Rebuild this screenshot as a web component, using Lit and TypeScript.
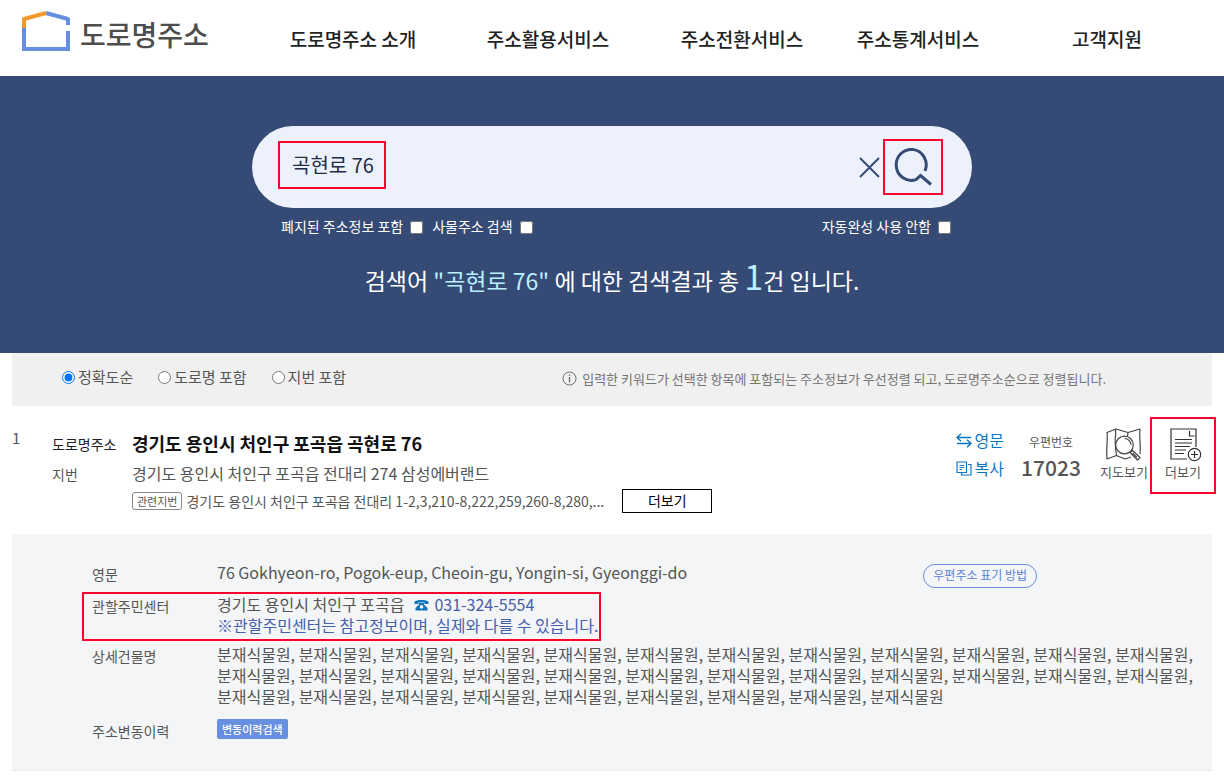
import { LitElement, html, css, svg } from "lit";
import { customElement, state } from "lit/decorators.js";

const NAV = ["도로명주소 소개", "주소활용서비스", "주소전환서비스", "주소통계서비스", "고객지원"];
const SORTS = ["정확도순", "도로명 포함", "지번 포함"];
const BUILDINGS = Array.from({ length: 33 }, () => "분재식물원").join(", ");

const logoIcon = svg`<svg width="48" height="41" viewBox="0 0 48 41" fill="none" stroke-width="4" stroke-linejoin="round" aria-hidden="true">
  <path d="M2 17V38H46V20" stroke="#668fdf" stroke-linejoin="miter"/>
  <path d="M24 2L46 8V14" stroke="#668fdf"/>
  <path d="M2 17V8L24 2" stroke="#f39a2b"/>
</svg>`;
const clearIcon = svg`<svg width="21" height="21" viewBox="0 0 21 21" fill="none" stroke="#354a74" stroke-width="2" aria-hidden="true"><path d="M1 1L20 20M20 1L1 20"/></svg>`;
const searchIcon = svg`<svg width="38" height="38" viewBox="0 0 38 38" fill="none" stroke="#354a74" stroke-width="3" aria-hidden="true">
  <path d="M31 23A15 15.500 0 1 0 22 31.600L26.500 27.500L37 36.500"/>
</svg>`;
const infoIcon = svg`<svg width="15" height="15" viewBox="0 0 15 15" fill="none" stroke="#707070" aria-hidden="true"><circle cx="7.500" cy="7.500" r="6.500"/><path d="M7.500 6V11.500M7.500 3.500V5" stroke-width="1.300"/></svg>`;
const swapIcon = svg`<svg width="16" height="15" viewBox="0 0 16 15" fill="none" stroke="#0b77c4" stroke-width="1.400" aria-hidden="true"><path d="M15 4.500H1M5 .800L1 4.500L5 8.200M1 10.500H15M11 6.800L15 10.500L11 14.200"/></svg>`;
const copyIcon = svg`<svg width="16" height="15" viewBox="0 0 16 15" fill="none" stroke="#0b77c4" stroke-width="1.200" aria-hidden="true"><path d="M1 1H10.500V11.500H1ZM12 3.500H15V14H5.500V12M3.500 4.500H8M3.500 6.500H8M3.500 8.500H6"/></svg>`;
const mapIcon = svg`<svg width="36" height="34" viewBox="0 0 36 34" fill="none" stroke="#444" stroke-width="1.200" stroke-linejoin="round" aria-hidden="true">
  <path d="M9.500 8C10.500 5 8.500 4 10 1L1 4.500C2 12 0 20 1 31L10.500 27.500L19 31L25 29M10 1L22 4.500L34 1C33 8 35 17 34 26M22 4.500L21.500 8M9.500 8C8.500 12 9.500 20 10.500 27.500"/>
  <circle cx="18.500" cy="17" r="8.800" fill="#fff"/>
  <path d="M18.500 10.500A6.500 6.500 0 0 1 25 17" />
  <path d="M24 24.500L31.500 32L34 29.500L26.500 22.500Z" fill="#fff"/>
  <path d="M26.500 25L31 29.500"/>
</svg>`;
const docIcon = svg`<svg width="38" height="34" viewBox="-6 0 38 34" fill="none" stroke="#333" stroke-width="1.200" aria-hidden="true">
  <path d="M26 19V1H1V31H17M19.500 3V8H24.500M5 11.500H22M5 15H22M5 18.500H20M5 22H16M5 25.500H14"/>
  <circle cx="24.500" cy="26.500" r="6.200" fill="#fff"/><path d="M24.500 23V30M21 26.500H28"/>
</svg>`;
const phoneIcon = svg`<svg width="15" height="12" viewBox="0 0 15 12" aria-hidden="true"><path d="M0.500 5V2.800C2 .3 13 .3 14.500 2.800V5H10.500V3.500H4.500V5Z" fill="#1273b8"/><path d="M5 4H10V5.500L13.500 9V11.500H1.500V9L5 5.500Z" fill="#1273b8"/><circle cx="7.500" cy="7.900" r="1.800" fill="#f3f5f7"/></svg>`;

@customElement("app-root")
export class AppRoot extends LitElement {
  @state() private query = "곡현로 76";

  static styles = css`
    :host {
      display: block;
      background: #fff;
      color: #555;
      font: 14px/20px "Noto Sans CJK KR", sans-serif;
    }
    * { box-sizing: border-box; }
    button, input { font: inherit; color: inherit; margin: 0; }
    button { background: none; border: 0; padding: 0; cursor: pointer; }
    a { color: inherit; text-decoration: none; }
    svg { display: block; flex: none; }
    h1, dl, dd, dt { margin: 0; font-weight: 400; }

    .header { display: flex; height: 76px; }
    .logo {
      display: flex; align-items: flex-start; gap: 10px;
      width: 234px; padding: 11px 0 0 22px;
      color: #4d4d4d; font-size: 28px; line-height: 46px; font-weight: 500;
    }
    .nav {
      flex: 1; display: grid; grid-template-columns: 196fr 194fr 194fr 158fr 220fr;
      margin: 0 7px 0 21px; padding-top: 2px; align-items: center; justify-items: center;
      color: #222; font-size: 19px; line-height: 28px; font-weight: 500;
    }

    .hero {
      display: flex; flex-direction: column; align-items: center;
      padding: 50px 20px 53px; background: #354a74; color: #fff;
    }
    .search {
      position: relative; display: flex; align-items: center; gap: 3px;
      width: 100%; max-width: 720px; height: 82px;
      padding: 0 29px 0 40px; border-radius: 41px; background: #edf1fc;
    }
    .query {
      flex: 1; min-width: 0; height: 48px; padding: 0 0 6px; border: 0; outline: 0;
      background: none; color: #222c44; font-size: 20px;
    }
    .mark { position: absolute; left: 26px; top: 15px; width: 108px; height: 48px; border: 2px solid #f9032f; pointer-events: none; }
    .go { width: 60px; height: 56px; border: 2px solid #f9032f; padding: 0 0 0 9px; }
    .options { display: flex; width: 100%; max-width: 720px; padding: 8px 21px 0 29px; gap: 9px; }
    .options label { display: flex; align-items: center; gap: 7px; }
    .options input { width: 13px; height: 13px; margin-top: 3px; }
    .options .last { margin-left: auto; }
    .summary { margin-top: 16px; font-size: 23px; line-height: 48px; height: 48px; white-space: nowrap; }
    .hit { color: #b9f0ff; }
    .count { color: #b9f0ff; font-size: 34px; }

    .sort {
      display: flex; align-items: center; height: 53px; margin: 0 12px;
      padding: 0 106px 4px 50px; background: #f0f0f0; font-size: 15px;
    }
    .radios { display: flex; gap: 25px; margin-top: -2px; }
    .radios label { display: flex; align-items: center; gap: 3px; }
    .radios input { width: 13px; height: 13px; margin-top: 2px; }
    .hint { display: flex; align-items: center; gap: 5px; margin: 2px 0 0 auto; font-size: 13px; color: #757575; white-space: nowrap; }

    .result { display: flex; align-items: flex-start; height: 128px; padding: 0 8px 0 12px; }
    .no { width: 40px; padding-top: 22px; font-size: 15px; }
    .addr { flex: 1; display: grid; grid-template-columns: 80px 1fr; padding-top: 22px; }
    .addr dt { padding-top: 6px; line-height: 20px; }
    .addr dd { line-height: 30px; font-size: 16px; min-width: 0; }
    .addr .dark { color: #222; }
    .addr .road { color: #111; font-size: 18px; font-weight: 700; }
    .addr .related { grid-column: 2; display: flex; align-items: center; gap: 4px; font-size: 14px; line-height: 24px; margin-top: 1px; white-space: nowrap; }
    .tag { border: 1px solid #888; border-radius: 3px; padding: 0 4px; font-size: 11px; line-height: 16px; }
    .more { width: 90px; height: 24px; margin-left: 14px; padding-bottom: 2px; border: 1px solid #000; color: #000; line-height: 20px; }
    .actions { display: flex; align-items: flex-start; }
    .links { display: grid; row-gap: 8px; padding-top: 24px; color: #0b77c4; font-size: 16px; }
    .links button { display: flex; align-items: center; gap: 3px; line-height: 20px; }
    .zip { width: 60px; margin: 26px 0 0 17px; text-align: center; font-size: 12px; }
    .zip strong { display: block; font-size: 21px; line-height: 30px; font-weight: 500; }
    .tool { display: flex; flex-direction: column; align-items: center; width: 66px; height: 77px; margin-top: 11px; border: 2px solid transparent; padding-top: 9px; font-size: 13px; line-height: 20px; }
    .map { margin-left: 10px; margin-right: -7px; }
    .marked { border-color: #f9032f; }

    .detail { margin: 0 12px 7px; padding: 28px 10px 29px 80px; background: #f3f5f7; border-bottom: 1px solid #eaecee; word-break: keep-all; }
    .row { display: grid; grid-template-columns: 125px 1fr auto; align-items: start; }
    .row dt { padding-top: 2px; }
    .row dd { font-size: 16px; line-height: 21px; }
    .howto { display: block; height: 24px; margin: 2px 165px 0 0; padding: 0 9px 2px; border: 1px solid #668fdf; border-radius: 12px; color: #5f83d2; font-size: 12px; line-height: 20px; }
    .center { width: fit-content; margin: 4px 0 0 -10px; padding: 0 1px 3px 8px; border: 2px solid #f9032f; }
    .buildings { margin-top: 3px; }
    .history { margin-top: 12px; }
    .history button { display: block; padding: 0 5px; border-radius: 2px; background: #668fdf; color: #fff; font-size: 11px; line-height: 20px; font-weight: 500; }
    .tel { display: inline-flex; align-items: center; gap: 5px; margin-left: 10px; vertical-align: top; }
    .blue { color: #4660ad; }
  `;

  private onInput(e: InputEvent) {
    this.query = (e.target as HTMLInputElement).value;
  }

  render() {
    return html`
      <header class="header">
        <a class="logo" href="#">${logoIcon}<span>도로명주소</span></a>
        <nav class="nav">${NAV.map((n) => html`<a href="#">${n}</a>`)}</nav>
      </header>
      <section class="hero">
        <form class="search" @submit=${(e: Event) => e.preventDefault()}>
          <input class="query" type="text" aria-label="주소 검색어" .value=${this.query} @input=${this.onInput} />
          <span class="mark"></span>
          <button type="button" aria-label="지우기" @click=${() => (this.query = "")}>${clearIcon}</button>
          <button class="go" type="submit" aria-label="검색">${searchIcon}</button>
        </form>
        <div class="options">
          <label>폐지된 주소정보 포함<input type="checkbox" /></label>
          <label>사물주소 검색<input type="checkbox" /></label>
          <label class="last">자동완성 사용 안함<input type="checkbox" /></label>
        </div>
        <h1 class="summary">검색어 <span class="hit">"곡현로 76"</span> 에 대한 검색결과 총 <span class="count">1</span>건 입니다.</h1>
      </section>
      <section class="sort">
        <div class="radios">
          ${SORTS.map((s, i) => html`<label><input type="radio" name="sort" ?checked=${i === 0} />${s}</label>`)}
        </div>
        <div class="hint">${infoIcon}입력한 키워드가 선택한 항목에 포함되는 주소정보가 우선정렬 되고, 도로명주소순으로 정렬됩니다.</div>
      </section>
      <section class="result">
        <div class="no">1</div>
        <dl class="addr">
          <dt class="dark">도로명주소</dt>
          <dd class="road">경기도 용인시 처인구 포곡읍 곡현로 76</dd>
          <dt>지번</dt>
          <dd>경기도 용인시 처인구 포곡읍 전대리 274 삼성에버랜드</dd>
          <dd class="related">
            <span class="tag">관련지번</span>
            <span>경기도 용인시 처인구 포곡읍 전대리 1-2,3,210-8,222,259,260-8,280,...</span>
            <button class="more" type="button">더보기</button>
          </dd>
        </dl>
        <div class="actions">
          <div class="links">
            <button type="button">${swapIcon}영문</button>
            <button type="button">${copyIcon}복사</button>
          </div>
          <div class="zip">우편번호<strong>17023</strong></div>
          <button class="tool map" type="button">${mapIcon}지도보기</button>
          <button class="tool marked" type="button">${docIcon}더보기</button>
        </div>
      </section>
      <dl class="detail">
        <div class="row">
          <dt>영문</dt>
          <dd>76 Gokhyeon-ro, Pogok-eup, Cheoin-gu, Yongin-si, Gyeonggi-do</dd>
          <dd><button class="howto" type="button">우편주소 표기 방법</button></dd>
        </div>
        <div class="row center">
          <dt>관할주민센터</dt>
          <dd>
            경기도 용인시 처인구 포곡읍<a class="tel blue" href="tel:031-324-5554">${phoneIcon}031-324-5554</a>
            <div class="blue">※관할주민센터는 참고정보이며, 실제와 다를 수 있습니다.</div>
          </dd>
        </div>
        <div class="row buildings">
          <dt>상세건물명</dt>
          <dd>${BUILDINGS}</dd>
        </div>
        <div class="row history">
          <dt>주소변동이력</dt>
          <dd><button type="button">변동이력검색</button></dd>
        </div>
      </dl>
    `;
  }
}
